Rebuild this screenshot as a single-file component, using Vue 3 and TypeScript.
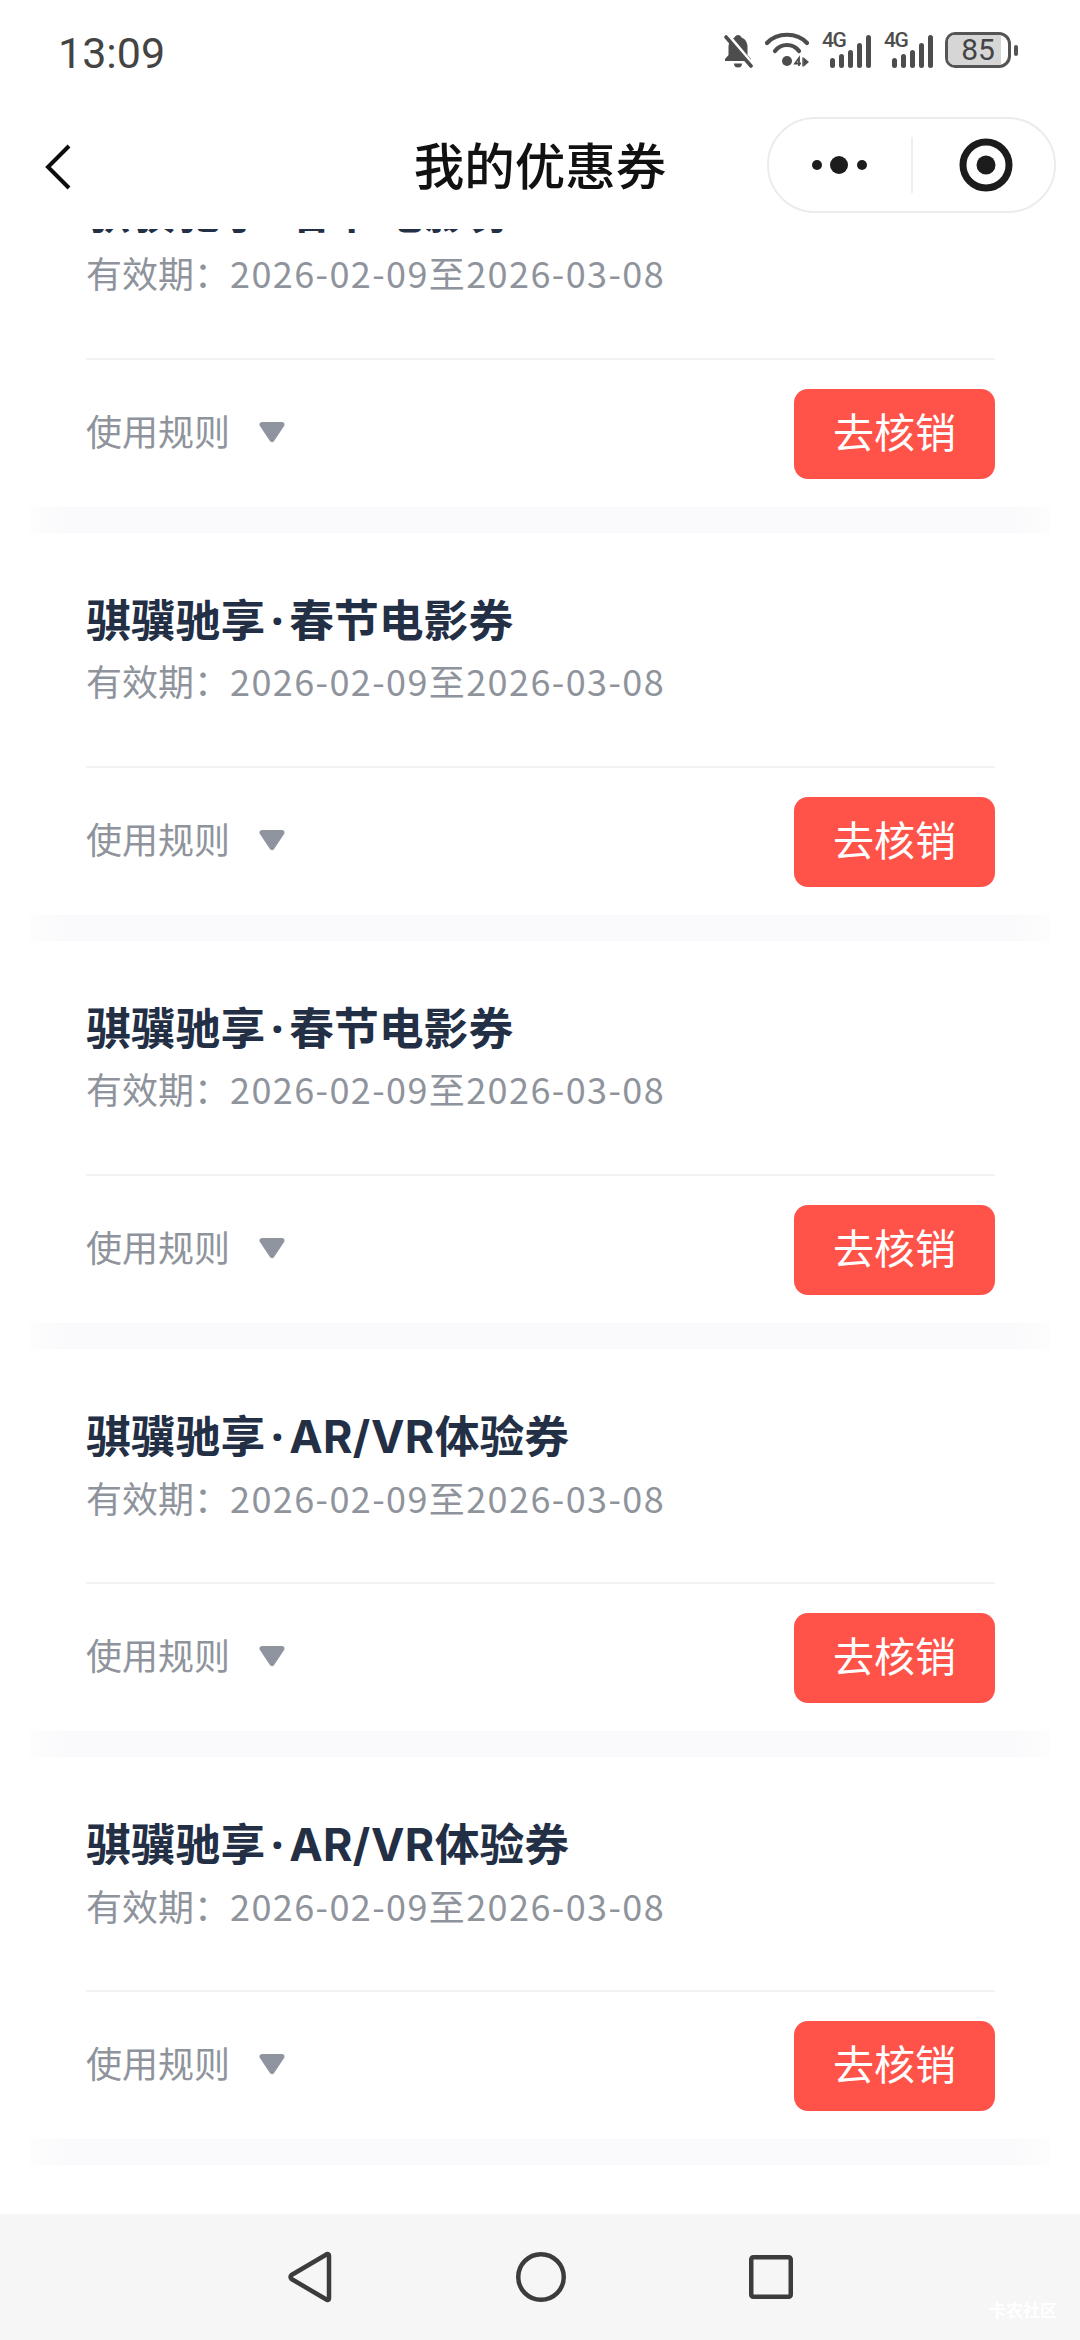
<script setup lang="ts">
interface Coupon { id: number; brand: string; tag?: string; name: string }
const coupons: Coupon[] = [
  { id: 1, brand: '骐骥驰享', name: '春节电影券' },
  { id: 2, brand: '骐骥驰享', name: '春节电影券' },
  { id: 3, brand: '骐骥驰享', name: '春节电影券' },
  { id: 4, brand: '骐骥驰享', tag: 'AR/VR', name: '体验券' },
  { id: 5, brand: '骐骥驰享', tag: 'AR/VR', name: '体验券' },
]
const signals = [0, 1]
</script>

<template>
  <div class="phone">
    <div class="status">
      <span class="time">13:09</span>
      <div class="status-icons">
        <svg class="i-bell" width="30" height="34" viewBox="0 0 30 34">
          <path d="M15 1c-1.500 0-3 1-3.500 2.500C7.500 5 5.500 9 5.500 13v8L2 25v2h26v-2l-3.500-4v-8c0-4-2-8-6-9.500C18 2 16.500 1 15 1z" fill="#4d4d4d"/>
          <path d="M3 -1l27 32" stroke="#fff" stroke-width="4"/>
          <path d="M3 3l25 29" stroke="#4d4d4d" stroke-width="3.600" stroke-linecap="round"/>
          <path d="M11 29.500h8a4 4 0 0 1-8 0z" fill="#4d4d4d"/>
        </svg>
        <svg class="i-wifi" width="44" height="36" viewBox="0 0 44 36">
          <path d="M2 11C12 0 32 0 42 11" fill="none" stroke="#4d4d4d" stroke-width="4.200" stroke-linecap="round"/>
          <path d="M10 19C16 11 28 11 34 19" fill="none" stroke="#4d4d4d" stroke-width="4.200" stroke-linecap="round"/>
          <circle cx="22" cy="29" r="5" fill="#4d4d4d"/>
          <path d="M34 34v-8l-4 5.500h6" fill="none" stroke="#4d4d4d" stroke-width="1.800"/>
          <path d="M38 25.500v9M39.500 27v6l3.500-3z" fill="#4d4d4d" stroke="#4d4d4d" stroke-width="1.400"/>
        </svg>
        <div v-for="s in signals" :key="s" class="signal">
          <span class="g4">4G</span>
          <div class="bars">
            <i class="b1"></i><i class="b2"></i><i class="b3"></i><i class="b4"></i><i class="b5"></i>
          </div>
        </div>
        <div class="battery">
          <div class="cell"><div class="fill"></div><span>85</span></div>
          <i class="tip"></i>
        </div>
      </div>
    </div>

    <header class="nav">
      <svg class="back" width="26" height="46" viewBox="0 0 26 46">
        <path d="M24 2 3 23l21 21" fill="none" stroke="#0d0d0d" stroke-width="4"/>
      </svg>
      <h1 class="nav-title">我的优惠券</h1>
      <div class="capsule">
        <svg class="dots" width="56" height="20" viewBox="0 0 56 20">
          <circle cx="6" cy="10" r="5" fill="#1c1c1c"/>
          <circle cx="28" cy="10" r="9" fill="#1c1c1c"/>
          <circle cx="51" cy="10" r="5" fill="#1c1c1c"/>
        </svg>
        <i class="cap-line"></i>
        <svg class="target" width="54" height="54" viewBox="0 0 54 54">
          <circle cx="27" cy="27" r="23" fill="none" stroke="#1c1c1c" stroke-width="7"/>
          <circle cx="27" cy="27" r="9.500" fill="#1c1c1c"/>
        </svg>
      </div>
    </header>

    <main class="viewport">
      <div class="list">
        <section v-for="c in coupons" :key="c.id" class="card">
          <div class="info">
            <h2 class="title">{{ c.brand }}<span class="dot">·</span><span v-if="c.tag" class="tag">{{ c.tag }}</span>{{ c.name }}</h2>
            <p class="date">有效期：<span class="range">2026-02-09至2026-03-08</span></p>
          </div>
          <div class="foot">
            <div class="rules">
              <span>使用规则</span>
              <svg width="28" height="22" viewBox="0 0 28 22">
                <path d="M4 3.500h20L14 18.500z" fill="#8f949e" stroke="#8f949e" stroke-width="5" stroke-linejoin="round"/>
              </svg>
            </div>
            <button class="verify" type="button">去核销</button>
          </div>
          <div class="gap"></div>
        </section>
      </div>
    </main>

    <footer class="sysnav">
      <svg class="tri" width="44" height="52" viewBox="0 0 44 52">
        <path d="M41 4.500v43a1.500 1.500 0 0 1-2.600 1L3.500 28a3 3 0 0 1 0-4L38.400 3.500a1.500 1.500 0 0 1 2.600 1z" fill="none" stroke="#3c3c3c" stroke-width="4.500" stroke-linejoin="round"/>
      </svg>
      <svg class="home" width="50" height="50" viewBox="0 0 50 50">
        <circle cx="25" cy="25" r="22.750" fill="none" stroke="#3c3c3c" stroke-width="4.500"/>
      </svg>
      <svg class="recent" width="44" height="44" viewBox="0 0 44 44">
        <rect x="2.250" y="2.250" width="39.500" height="39.500" rx="2" fill="none" stroke="#3c3c3c" stroke-width="4.500"/>
      </svg>
      <span class="watermark">卡农社区</span>
    </footer>
  </div>
</template>

<style>
html, body { margin: 0; background: #fff; }
</style>

<style scoped>
.phone {
  width: 1080px;
  height: 2340px;
  display: flex;
  flex-direction: column;
  overflow: hidden;
  background: #fff;
  font-family: "Noto Sans CJK SC", "Noto Sans", sans-serif;
}
.status {
  height: 104px;
  flex: none;
  display: flex;
  align-items: flex-start;
  justify-content: space-between;
  padding: 0 62px 0 58px;
  box-sizing: border-box;
}
.time {
  font-family: Roboto, "Noto Sans", sans-serif;
  font-size: 43px;
  font-weight: 400;
  line-height: 50px;
  margin-top: 28px;
  color: #444;
}
.status-icons {
  display: flex;
  align-items: flex-start;
  margin-top: 32px;
}
.i-bell { margin-top: 2px; }
.i-wifi { margin-left: 12px; }
.signal {
  width: 50px;
  height: 36px;
  margin-left: 12px;
  position: relative;
}
.g4 {
  position: absolute;
  left: 1px;
  top: 0;
  font-family: Roboto, sans-serif;
  font-size: 21px;
  font-weight: 500;
  line-height: 17px;
  color: #4d4d4d;
  letter-spacing: -1.500px;
}
.bars {
  position: absolute;
  right: 0;
  bottom: 0;
  display: flex;
  align-items: flex-end;
  gap: 3.500px;
}
.bars i {
  display: block;
  width: 5.500px;
  background: #4d4d4d;
  border-radius: 2.750px;
}
.b1 { height: 10px; }
.b2 { height: 14px; }
.b3 { height: 18px; }
.b4 { height: 25px; }
.b5 { height: 33px; }
.battery {
  display: flex;
  align-items: center;
  margin-left: 12px;
}
.cell {
  position: relative;
  width: 66px;
  height: 36px;
  box-sizing: border-box;
  border: 3px solid #555;
  border-radius: 10px 12px 12px 10px;
  overflow: hidden;
  display: flex;
  align-items: center;
  justify-content: center;
}
.fill {
  position: absolute;
  left: 0;
  top: 0;
  bottom: 0;
  width: 88%;
  background: #d6d6d6;
}
.cell span {
  position: relative;
  font-family: Roboto, sans-serif;
  font-size: 30px;
  line-height: 30px;
  color: #444;
}
.tip {
  display: block;
  width: 4px;
  height: 11px;
  margin-left: 3px;
  background: #555;
  border-radius: 2px;
}
.nav {
  height: 125px;
  flex: none;
  display: grid;
  grid-template-columns: 1fr auto 1fr;
  align-items: center;
  padding: 0 24px;
  box-sizing: border-box;
  position: relative;
  z-index: 2;
  background: #fff;
}
.back { margin-left: 21px; }
.nav-title {
  margin: 0 0 7px;
  font-size: 50.500px;
  font-weight: 500;
  line-height: 70px;
  color: #111;
}
.capsule {
  justify-self: end;
  width: 289px;
  height: 96px;
  margin-bottom: 3px;
  box-sizing: border-box;
  border: 2px solid #ececec;
  border-radius: 48px;
  display: flex;
  align-items: center;
  padding-left: 42px;
}
.cap-line {
  display: block;
  width: 2px;
  height: 56px;
  margin-left: 44px;
  background: #eee;
}
.target { margin-left: 46px; }
.viewport {
  flex: 1;
  min-height: 0;
  overflow: hidden;
}
.list {
  margin-top: -104px;
}
.card {
  margin: 0 30px;
  height: 408px;
  display: flex;
  flex-direction: column;
}
.info {
  height: 235px;
  margin: 0 55px 0 56px;
  box-sizing: border-box;
  padding-top: 56px;
  border-bottom: 2px solid #f2f2f2;
}
.title {
  margin: 0;
  font-size: 44.800px;
  font-weight: 700;
  line-height: 58px;
  color: #232f45;
}
.dot {
  display: inline-block;
  width: 24px;
  text-align: center;
  font-family: "Noto Sans", sans-serif;
}
.tag {
  font-family: Inter, "Noto Sans", sans-serif;
  letter-spacing: 0.400px;
}
.date {
  margin: 6px 0 0;
  font-size: 36px;
  font-weight: 400;
  line-height: 50px;
  color: #8f949c;
}
.range { letter-spacing: 1.400px; }
.foot {
  flex: 1;
  margin: 0 55px 0 56px;
  display: flex;
  align-items: center;
  justify-content: space-between;
}
.rules {
  display: flex;
  align-items: center;
  gap: 28px;
  padding-bottom: 7px;
  font-size: 36px;
  color: #8f949c;
}
.rules svg { margin-top: 3px; }
.verify {
  width: 201px;
  height: 90px;
  padding: 0 0 8px;
  border: 0;
  border-radius: 14px;
  background: #ff5249;
  color: #fff;
  font-family: inherit;
  font-size: 41px;
  font-weight: 400;
}
.gap {
  height: 26px;
  flex: none;
  background: linear-gradient(90deg, #fdfdfe, #fafafc 40px, #fafafc 980px, #fdfdfe);
}
.sysnav {
  height: 126px;
  flex: none;
  background: #f6f6f6;
  display: flex;
  align-items: center;
  justify-content: center;
  position: relative;
}
.home { margin-left: 184px; }
.recent { margin-left: 183px; }
.watermark {
  position: absolute;
  right: 23px;
  bottom: 20px;
  font-size: 17px;
  font-weight: 700;
  line-height: 20px;
  color: #fff;
}
</style>
